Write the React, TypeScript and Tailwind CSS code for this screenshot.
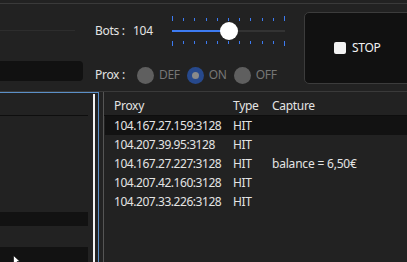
import React from "react";

type Row = {
  proxy: string;
  type: string;
  capture: string;
};

const rows: Row[] = [
  { proxy: "104.167.27.159:3128", type: "HIT", capture: "" },
  { proxy: "104.207.39.95:3128", type: "HIT", capture: "" },
  { proxy: "104.167.27.227:3128", type: "HIT", capture: "balance = 6,50€" },
  { proxy: "104.207.42.160:3128", type: "HIT", capture: "" },
  { proxy: "104.207.33.226:3128", type: "HIT", capture: "" },
];

const ticks = Array.from({ length: 11 }, (_, i) => i);

function Slider() {
  return (
    <div className="relative w-[113px] h-[30px] flex flex-col justify-between">
      {/* top ticks */}
      <div className="flex justify-between items-end h-[5px]">
        {ticks.map((i) => (
          <div
            key={i}
            className={
              i === 0 || i === 10
                ? "w-px h-[5px] bg-[#3d7bf2]"
                : "w-px h-[3px] bg-[#3d7bf2]"
            }
          />
        ))}
      </div>
      {/* track */}
      <div className="flex h-[2px]">
        <div className="w-[57px] bg-[#3d7bf2]" />
        <div className="flex-1 bg-[#333333]" />
      </div>
      {/* bottom ticks */}
      <div className="flex justify-between items-start h-[5px]">
        {ticks.map((i) => (
          <div
            key={i}
            className={
              i === 0 || i === 10
                ? "w-px h-[5px] bg-[#3d7bf2]"
                : "w-px h-[3px] bg-[#3d7bf2]"
            }
          />
        ))}
      </div>
      {/* thumb */}
      <div className="absolute left-[48px] top-[6px] w-[18px] h-[18px] rounded-full bg-white" />
    </div>
  );
}

function Radio({ label, checked }: { label: string; checked?: boolean }) {
  return (
    <div className="flex items-center gap-[5px]">
      {checked ? (
        <div className="w-[17px] h-[17px] rounded-full bg-[#27498c] flex items-center justify-center">
          <div className="w-[7px] h-[7px] rounded-full bg-[#8a8a8a]" />
        </div>
      ) : (
        <div className="w-[17px] h-[17px] rounded-full bg-[#5f5f5f]" />
      )}
      <span className="text-[#767676]">{label}</span>
    </div>
  );
}

export default function App() {
  return (
    <div
      className="relative w-[407px] h-[262px] overflow-hidden bg-[#222222] flex flex-col text-[12px] tracking-[-0.3px] text-[#e4e4e4]"
      style={{ fontFamily: '"Noto Sans", "Open Sans", sans-serif' }}
    >
      <div className="h-[3px] shrink-0" />

      {/* top controls */}
      <div className="h-[89px] shrink-0 flex border-t border-b border-[#3a3a3a]">
        <div className="w-[95px] shrink-0 flex flex-col">
          <div className="mt-[26px] w-[75px] h-px bg-[#2d2d2d]" />
          <div className="mt-[30px] w-[83px] h-[20px] bg-[#111111] rounded-r-[4px]" />
        </div>

        <div className="w-[209px] shrink-0 flex flex-col">
          <div className="mt-[12px] flex items-center h-[30px]">
            <span className="w-[38px]">Bots :</span>
            <span className="w-[39px]">104</span>
            <Slider />
          </div>
          <div className="mt-[20px] flex items-center">
            <span className="w-[42px]">Prox :</span>
            <div className="flex items-center gap-[7px]">
              <Radio label="DEF" />
              <Radio label="ON" checked />
              <Radio label="OFF" />
            </div>
          </div>
        </div>

        <div className="mt-[8px] w-[115px] h-[72px] shrink-0 rounded-[5px] border border-[#3c3c3c] bg-[#111111] flex items-center pl-[29px] gap-[6px]">
          <div className="w-[12px] h-[12px] rounded-[2px] bg-[#f2f2f2]" />
          <span className="text-[#f2f2f2]">STOP</span>
        </div>
      </div>

      {/* bottom panels */}
      <div className="flex flex-1 min-h-0">
        <div className="w-[99px] shrink-0 border-t border-r border-[#5b8fc7] flex">
          <div className="w-[93px] shrink-0 flex flex-col">
            <div className="mt-[22px] w-[88px] h-px bg-[#0e0e0e]" />
            <div className="mt-[96px] w-[88px] h-[17px] bg-[#121212]" />
            <div className="mt-[21px] w-[88px] h-[17px] bg-[#121212]" />
          </div>
          <div className="w-[2px] bg-[#f2f2f2] mt-px" />
        </div>

        <div className="w-[4px] shrink-0" />

        <div className="flex-1 border-l border-[#555555] flex flex-col">
          <div className="h-[23px] flex items-center pl-[10px] pt-[3px] border-b border-[#0e0e0e] mt-px">
            <span className="w-[119px]">Proxy</span>
            <span className="w-[39px]">Type</span>
            <span>Capture</span>
          </div>
          <div className="pl-[1px]">
            {rows.map((r, i) => (
              <div
                key={r.proxy}
                className={
                  i === 0
                    ? "h-[19px] flex items-center pl-[9px] bg-[#121212]"
                    : "h-[19px] flex items-center pl-[9px]"
                }
              >
                <span className="w-[119px] tracking-[-0.45px]">{r.proxy}</span>
                <span className="w-[39px]">{r.type}</span>
                <span className="tracking-[-0.2px]">{r.capture}</span>
              </div>
            ))}
          </div>
        </div>
      </div>

      {/* mouse pointer */}
      <svg
        className="absolute left-[13px] top-[255px]"
        width="8"
        height="10"
        viewBox="0 0 8 10"
      >
        <path d="M0.5 0.5 L0.5 9 L2.5 7 L4 9.5 L5.5 9 L4.2 6.5 L7 6.5 Z" fill="#fff" stroke="#000" strokeWidth="0.6" />
      </svg>
    </div>
  );
}
